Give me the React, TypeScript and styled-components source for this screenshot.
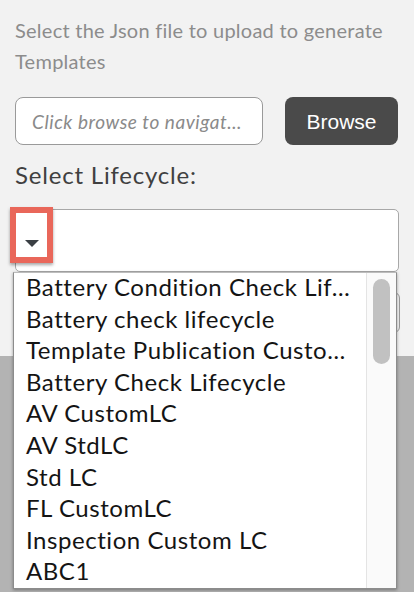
import React from "react";
import styled, { createGlobalStyle } from "styled-components";

const Global = createGlobalStyle`
  html, body { margin: 0; padding: 0; }
  body { font-family: Lato, "Open Sans", sans-serif; background: #b3b3b3; }
  * { box-sizing: border-box; }
`;

const Page = styled.div`
  position: relative;
  width: 414px;
  height: 592px;
  display: flex;
  flex-direction: column;
  overflow: hidden;
`;

const Top = styled.section`
  height: 356px;
  background: #f2f2f2;
  padding: 15px 15px 0 15px;
  display: flex;
  flex-direction: column;
`;

const Bottom = styled.div`
  flex: 1;
  background: #b3b3b3;
`;

const Hint = styled.p`
  margin: 0;
  font-size: 20px;
  line-height: 31px;
  color: #8c8c8c;
  letter-spacing: 0.25px;
`;

const FileRow = styled.div`
  margin-top: 20px;
  display: flex;
  gap: 22px;
  height: 48px;
`;

const FileInput = styled.div`
  width: 248px;
  height: 48px;
  background: #fff;
  border: 1px solid #9a9a9a;
  border-radius: 8px;
  display: flex;
  align-items: center;
  padding-left: 16px;
  font-size: 19px;
  font-style: italic;
  color: #8a8a8a;
  letter-spacing: 0.55px;
  white-space: nowrap;
  overflow: hidden;
`;

const BrowseButton = styled.button`
  width: 113px;
  height: 48px;
  border: none;
  border-radius: 8px;
  background: #4a4a4a;
  color: #fff;
  font-family: "Liberation Sans", Arial, sans-serif;
  font-size: 21px;
  padding: 0;
  padding-top: 1px;
`;

const Label = styled.div`
  margin-top: 15px;
  font-size: 24px;
  line-height: 30px;
  color: #404040;
  letter-spacing: 0.8px;
`;

const SelectWrap = styled.div`
  position: relative;
  margin-top: 19px;
  width: 384px;
`;

const SelectBox = styled.div`
  height: 63px;
  background: #fff;
  border: 1px solid #a8a8a8;
  border-radius: 5px;
  display: flex;
  align-items: center;
  padding-left: 9px;
  padding-top: 6px;
`;

const Highlight = styled.div`
  position: absolute;
  left: -5px;
  top: -2px;
  width: 43px;
  height: 56px;
  border: 6px solid #e9675a;
  box-shadow: 0 2px 3px rgba(0, 0, 0, 0.35);
`;

const HiddenField = styled.div`
  margin-top: 20px;
  height: 41px;
  width: 385px;
  border: 1px solid #9a9a9a;
  border-radius: 6px;
  background: #f2f2f2;
`;

const Menu = styled.div`
  position: absolute;
  left: 13px;
  top: 272px;
  width: 384px;
  height: 317px;
  background: #fff;
  border: 1px solid #8c8c8c;
  border-top-color: #bdbdbd;
  box-shadow: 0 1px 3px rgba(0, 0, 0, 0.35);
  display: grid;
  grid-template-columns: 1fr 30px;
  overflow: hidden;
`;

const Options = styled.ul`
  list-style: none;
  margin: 0;
  padding: 0;
`;

const Option = styled.li`
  height: 31.6px;
  line-height: 28px;
  padding-left: 12px;
  font-size: 24px;
  color: #141414;
  white-space: nowrap;
  overflow: hidden;
  letter-spacing: 0.55px;
`;

const Track = styled.div`
  background: #fafafa;
  border-left: 1px solid #e4e4e4;
  padding: 6px 6px 0 6px;
`;

const Thumb = styled.div`
  width: 17px;
  height: 85px;
  border-radius: 9px;
  background: #c1c1c1;
`;

const items = [
  "Battery Condition Check Lif…",
  "Battery check lifecycle",
  "Template Publication Custo…",
  "Battery Check Lifecycle",
  "AV CustomLC",
  "AV StdLC",
  "Std LC",
  "FL CustomLC",
  "Inspection Custom LC",
  "ABC1",
];

export default function App() {
  return (
    <>
      <Global />
      <Page>
        <Top>
          <Hint>
            Select the Json file to upload to generate
            <br />
            Templates
          </Hint>
          <FileRow>
            <FileInput>Click browse to navigat…</FileInput>
            <BrowseButton>Browse</BrowseButton>
          </FileRow>
          <Label>Select Lifecycle:</Label>
          <SelectWrap>
            <SelectBox>
              <svg width="14" height="8" viewBox="0 0 14 8">
                <path d="M0 0 H14 L7 7 Z" fill="#3a3f44" />
              </svg>
            </SelectBox>
            <Highlight />
          </SelectWrap>
          <HiddenField />
        </Top>
        <Bottom />
        <Menu>
          <Options>
            {items.map((t) => (
              <Option key={t}>{t}</Option>
            ))}
          </Options>
          <Track>
            <Thumb />
          </Track>
        </Menu>
      </Page>
    </>
  );
}
